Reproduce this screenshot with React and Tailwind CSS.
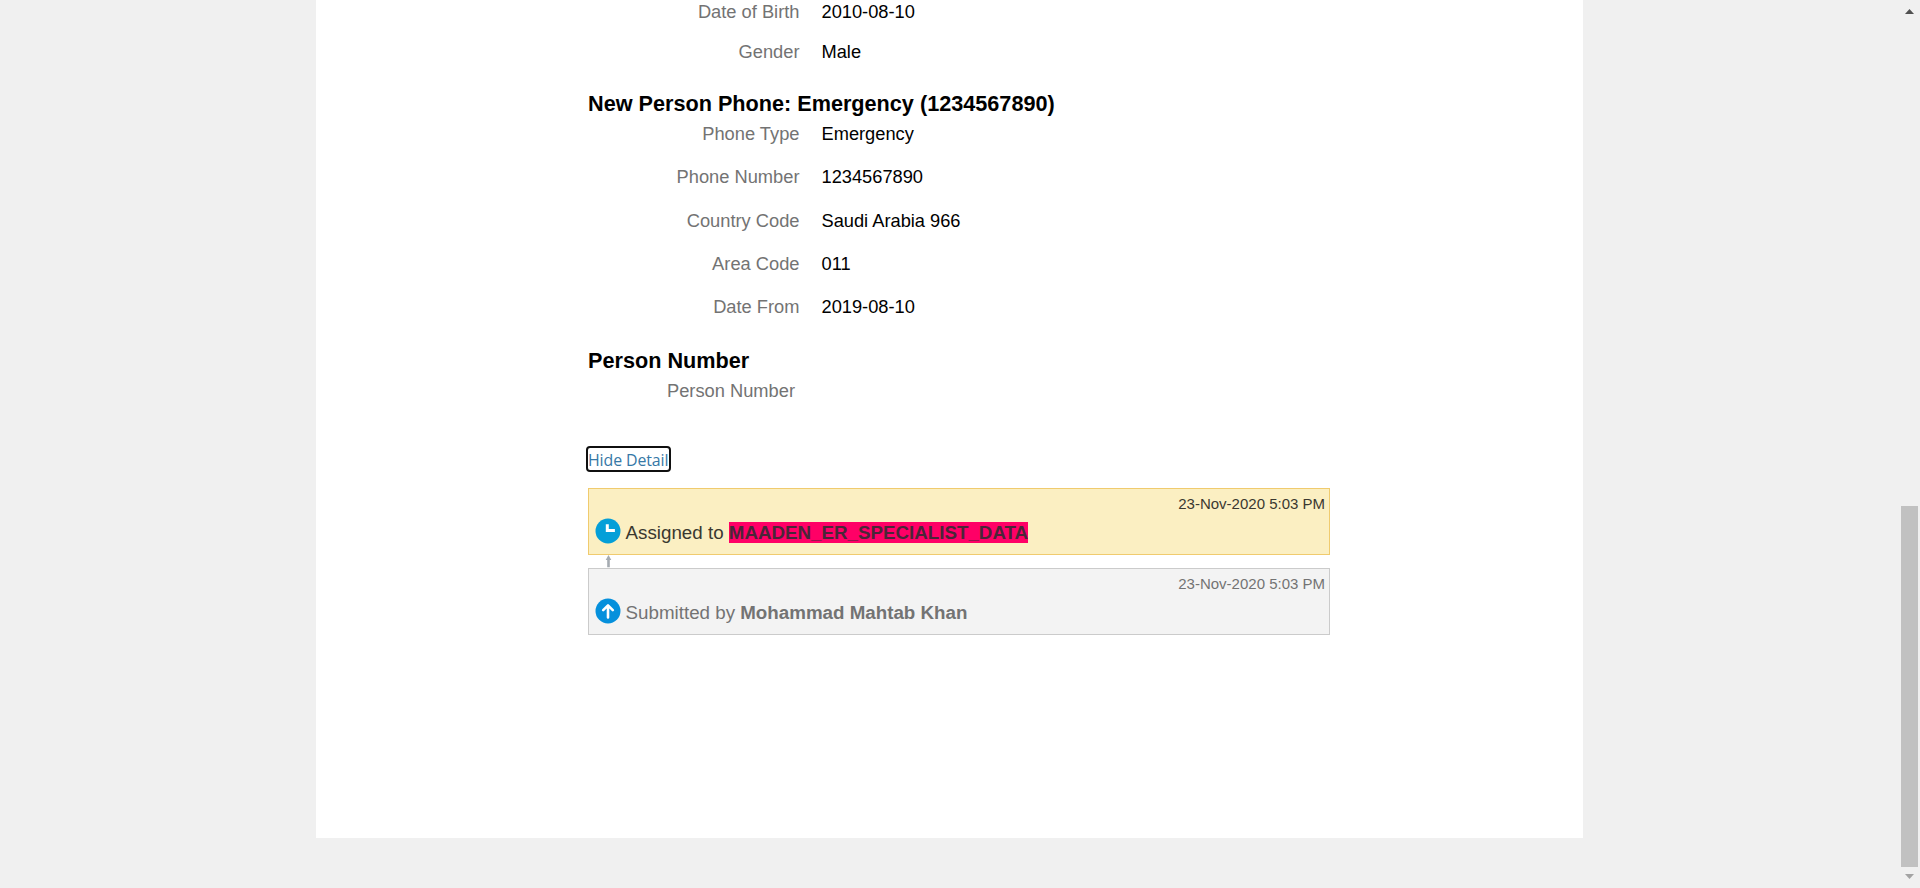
const personRows = [
  { label: "Date of Birth", value: "2010-08-10", space: "mb-4" },
  { label: "Gender", value: "Male", space: "mb-[27px]" },
];

const phoneRows = [
  { label: "Phone Type", value: "Emergency", space: "mt-[5px] mb-[19px]" },
  { label: "Phone Number", value: "1234567890", space: "mb-5" },
  { label: "Country Code", value: "Saudi Arabia 966", space: "mb-[19px]" },
  { label: "Area Code", value: "011", space: "mb-[19px]" },
  { label: "Date From", value: "2019-08-10", space: "mb-[29px]" },
];

function Field({ label, value, space }) {
  return (
    <div className={`flex h-6 gap-[22px] leading-6 ${space}`}>
      <dt className="w-[211.5px] text-right text-[18.3px] text-[#737373]">{label}</dt>
      <dd className="text-[18.25px] text-black">{value}</dd>
    </div>
  );
}

function Heading({ children }) {
  return <h2 className="h-[26px] text-[21.65px] leading-[26px] font-bold text-black">{children}</h2>;
}

function ClockIcon() {
  return (
    <svg className="block size-[26px]" viewBox="0 0 26 26" fill="none">
      <circle cx="13" cy="13" r="12.5" fill="#049fd8" />
      <path d="M12.3 6.3v6.1h7.6" stroke="#fff" strokeWidth="3" />
    </svg>
  );
}

function UpIcon() {
  return (
    <svg className="block size-[26px]" viewBox="0 0 26 26" fill="none">
      <circle cx="13" cy="13" r="12.5" fill="#0590dc" />
      <path d="M13 19.5V7.5M8.2 12.2 13 7.4l4.8 4.8" stroke="#fff" strokeWidth="2.6" strokeLinecap="round" strokeLinejoin="round" />
    </svg>
  );
}

function Step({ tone, date, icon, children }) {
  return (
    <div className={`h-[67px] w-[742px] border ${tone}`}>
      <div className="mt-[5px] h-5 pr-[4px] text-right text-[15px] leading-5">{date}</div>
      <div className="flex h-[26px] gap-[4.6px] pt-1 pl-[6px]">
        {icon}
        <div className="pt-[3px] text-[18.75px] leading-6 whitespace-nowrap">{children}</div>
      </div>
    </div>
  );
}

function Scrollbar() {
  return (
    <div className="flex h-full w-[19px] flex-col items-start">
      <svg className="mt-[9px] ml-1 block h-[5px] w-[9px]" viewBox="0 0 9 5">
        <path d="M0 5 4.5 0 9 5Z" fill="#505050" />
      </svg>
      <div className="mt-[492px] h-[361px] w-[17px] bg-[#c1c1c1]" />
      <svg className="mt-[7px] ml-1 block h-[5px] w-[9px]" viewBox="0 0 9 5">
        <path d="M0 0 4.5 5 9 0Z" fill="#a3a3a3" />
      </svg>
    </div>
  );
}

export default function App() {
  return (
    <div className="flex h-[888px] w-[1920px] overflow-hidden bg-[#f0f0f0] pl-[316px] font-['Liberation_Sans',Arial,sans-serif]">
      <main className="h-[838px] w-[1267px] bg-white pl-[272px]">
        <dl>
          {personRows.map((r) => (
            <Field key={r.label} {...r} />
          ))}
        </dl>
        <Heading>New Person Phone: Emergency (1234567890)</Heading>
        <dl>
          {phoneRows.map((r) => (
            <Field key={r.label} {...r} />
          ))}
        </dl>
        <Heading>Person Number</Heading>
        <div className="mt-[5px] h-6 w-[207px] text-right text-[18.3px] leading-6 text-[#737373]">Person Number</div>
        <div className="mt-[43px] -ml-[2px] flex h-[26px] w-[85px] rounded-[4px] border-2 border-[#101010]">
          <a className="pt-px font-['Open_Sans','Noto_Sans',sans-serif] text-[15.9px] leading-[22px] tracking-[-0.1px] whitespace-nowrap text-[#3678a6]">
            Hide Detail
          </a>
        </div>
        <section className="mt-4">
          <Step tone="border-[#f0cb6e] bg-[#fbefc2] text-[#3a3830]" date="23-Nov-2020 5:03 PM" icon={<ClockIcon />}>
            Assigned to <b className="bg-[#ff0066] text-[#4a2638]">MAADEN_ER_SPECIALIST_DATA</b>
          </Step>
          <svg className="ml-[17px] block h-[13px] w-[7px]" viewBox="0 0 7 13">
            <path d="M3.5 0 6.3 5H4.8v7.2H2.2V5H.7Z" fill="#a5abb1" />
          </svg>
          <Step tone="border-[#cbcbcb] bg-[#f3f3f3] text-[#737373]" date="23-Nov-2020 5:03 PM" icon={<UpIcon />}>
            Submitted by <b>Mohammad Mahtab Khan</b>
          </Step>
        </section>
      </main>
      <div className="h-full w-[318px]" />
      <Scrollbar />
    </div>
  );
}
